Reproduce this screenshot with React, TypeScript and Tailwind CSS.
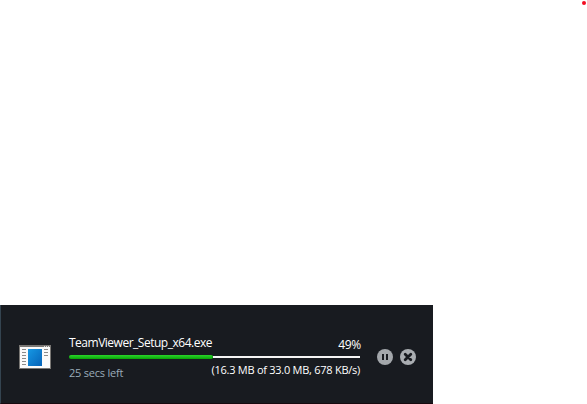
function AppIcon() {
  return (
    <svg width="32" height="24" viewBox="0 0 32 24" shapeRendering="crispEdges" className="shrink-0">
      <defs>
        <linearGradient id="window" x1="0" y1="0" x2="1" y2="1">
          <stop offset="0" stopColor="#1698e4" />
          <stop offset="1" stopColor="#0663b8" />
        </linearGradient>
      </defs>
      <rect width="32" height="24" fill="#797774" />
      <rect x="1" y="2" width="30" height="21" fill="#fafafa" />
      <path d="M25 1h1v1h-1zM27 1h1v1h-1zM29 1h1v1h-1z" fill="#ddd" />
      <rect x="9" y="4" width="14" height="17" fill="url(#window)" />
      <path d="M3 4.5h4M3 7.5h4M3 10.5h4M3 13.5h4M3 16.5h4M3 19.5h4M25 4.5h4M25 7.5h4M25 10.5h4" stroke="#8b8b8b" />
    </svg>
  );
}

function PauseButton() {
  return (
    <button aria-label="Pause" className="size-4">
      <svg width="16" height="16" viewBox="0 0 16 16">
        <circle cx="8" cy="8" r="8" fill="#a3a7ab" />
        <path d="M5 5h2v6H5zM9 5h2v6H9z" fill="#181b20" />
      </svg>
    </button>
  );
}

function CancelButton() {
  return (
    <button aria-label="Cancel" className="size-4">
      <svg width="16" height="16" viewBox="0 0 16 16">
        <circle cx="8" cy="8" r="8" fill="#a9adb1" />
        <path d="M5.2 5.2l5.6 5.6M10.8 5.2l-5.6 5.6" stroke="#181b20" strokeWidth="2.8" strokeLinecap="round" />
      </svg>
    </button>
  );
}

export default function App() {
  return (
    <div className="flex h-[404px] w-[587px] flex-col justify-between overflow-hidden bg-white font-['Open_Sans','Noto_Sans',sans-serif]">
      <div className="flex justify-end pt-px pr-px">
        <div className="size-1 rounded-full bg-[#f30b20]" />
      </div>
      <div className="flex h-[99px] w-[433px] border-b border-l border-b-[#16090e] border-l-[#344450] bg-[#181b20] pl-[18px]">
        <div className="pt-10">
          <AppIcon />
        </div>
        <div className="ml-[18px] w-[292px] pt-[30px] text-[12px] leading-4 whitespace-nowrap text-white">
          <div className="flex h-5 justify-between">
            <span className="tracking-[-0.49px]">TeamViewer_Setup_x64.exe</span>
            <span className="mt-[2px] tracking-[-0.3px]">49%</span>
          </div>
          <div className="flex h-1 w-[291px] items-center">
            <div className="h-1 w-[144px] rounded-full bg-linear-to-b from-[#2ad52a] to-[#05a505]" />
            <div className="h-[2px] flex-1 bg-[#f5f5f5]" />
          </div>
          <div className="flex w-[291px] justify-between pt-[3px] text-[11px]">
            <span className="mt-[3px] tracking-[-0.22px] text-[#9aacb9]">25 secs left</span>
            <span className="tracking-[-0.26px]">(16.3 MB of 33.0 MB, 678 KB/s)</span>
          </div>
        </div>
        <div className="ml-4 flex gap-[7px] pt-11">
          <PauseButton />
          <CancelButton />
        </div>
      </div>
    </div>
  );
}
